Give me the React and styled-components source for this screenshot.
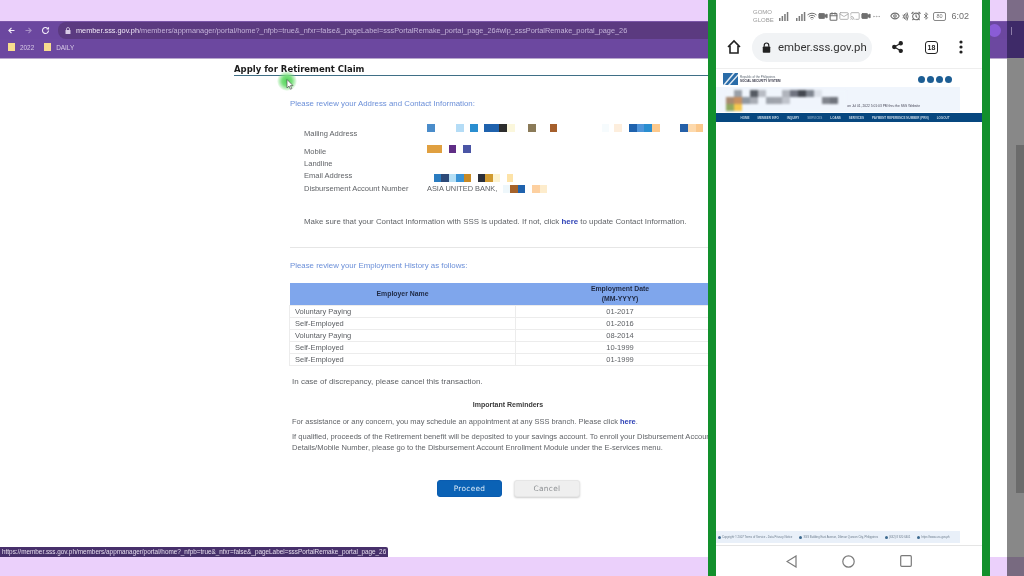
import React from 'react';
import styled, { createGlobalStyle } from 'styled-components';
import { Wifi, Video, Calendar, Mail, Cast, MoreHorizontal, Eye, Nfc, AlarmClock, Bluetooth } from 'lucide-react';

const GlobalStyle = createGlobalStyle`
  html, body {
    margin: 0;
    padding: 0;
    background: #ebd0fb;
  }
  body {
    font-family: "Liberation Sans", Arial, sans-serif;
    overflow: hidden;
  }
`;

const Stage = styled.div`
  position: relative;
  width: 1024px;
  height: 576px;
  overflow: hidden;
  padding-top: 21px;
  box-sizing: border-box;
  background: #ebd0fb;
  filter: blur(0.35px);
`;

/* browser window recorded on the desktop */
const Browser = styled.div`
  position: relative;
  height: 536px;
  display: flex;
  flex-direction: column;
  background: #fff;
`;
const AddressBar = styled.div`
  height: 17px;
  display: flex;
  align-items: stretch;
  background: #6b479f;
  border-top: 1px solid #7a55a8;
`;
const NavButtons = styled.div`
  width: 58px;
  padding-left: 7px;
  display: flex;
  align-items: center;
  gap: 8px;
  box-sizing: border-box;
`;
const UrlWrap = styled.div`
  flex: 1;
  margin-right: 10px;
  display: flex;
  align-items: center;
  gap: 5px;
  padding-left: 7px;
  border-radius: 8px 0 0 8px;
  background: #5b3a80;
  font-size: 7.33px;
  color: #c3b2d8;
  white-space: nowrap;
  overflow: hidden;
`;
const UrlHost = styled.span`
  color: #f0e8f6;
`;
const Avatar = styled.div`
  flex-shrink: 0;
  width: 13px;
  height: 13px;
  margin: 2px 23px 0 0;
  border-radius: 50%;
  background: #8a5cd6;
`;
const BookmarkBar = styled.div`
  height: 16px;
  padding-bottom: 3px;
  display: flex;
  align-items: center;
  gap: 10px;
  padding-left: 8px;
  background: #6c48a0;
  color: #d8cbe6;
  font-size: 6.4px;
`;
const Bookmark = styled.span`
  display: flex;
  align-items: center;
  gap: 5px;
`;
const Folder = styled.i`
  display: block;
  width: 7px;
  height: 8px;
  background: #f7dc8e;
`;

const Viewport = styled.div`
  flex: 1;
  display: flex;
  background: #fff;
  border-top: 1px solid #b8a7cd;
`;
const Content = styled.div`
  margin-left: 222px;
  width: 486px;
  flex-shrink: 0;
  color: #55585c;
  font-size: 7.9px;
`;
const PageTitle = styled.h1`
  margin: 0 0 0 12px;
  padding: 4px 0 0;
  width: 490px;
  font-family: "DejaVu Sans", sans-serif;
  font-size: 8.5px;
  font-weight: 700;
  line-height: 12px;
  color: #1b1b1b;
  border-bottom: 1px solid #3f6f86;
`;
const Inner = styled.div`
  padding-left: 68px;
  width: 470px;
`;
const Lead = styled.p`
  margin: ${(p) => p.$top}px 0 0;
  font-size: 7.85px;
  line-height: 10px;
  color: #6b8fd8;
  white-space: nowrap;
`;
const InfoGrid = styled.div`
  margin: 15px 0 0 14px;
  display: grid;
  grid-template-columns: 123px 1fr;
  color: #606367;
  font-size: 7.55px;
`;
const InfoLabel = styled.div`
  height: ${(p) => p.$h}px;
  padding-bottom: ${(p) => p.$pad || 0}px;
  display: flex;
  align-items: center;
`;
const InfoValue = styled.div`
  height: ${(p) => p.$h}px;
  display: flex;
  align-items: ${(p) => p.$align || 'flex-start'};
  padding-left: ${(p) => p.$indent || 0}px;
  white-space: nowrap;
`;
const BankName = styled.span`
  font-size: 7.4px;
`;
const Mosaic = styled.i`
  display: block;
  flex-shrink: 0;
  width: ${(p) => p.$w}px;
  height: 8px;
  margin-left: ${(p) => p.$gap || 0}px;
  background: ${(p) => p.$c};
`;
const Notice = styled.p`
  margin: 21px 0 0 14px;
  line-height: 12px;
  color: #606367;
  white-space: nowrap;
`;
const Divider = styled.div`
  height: 1px;
  margin-top: 19px;
  width: 430px;
  background: #e6e6e6;
`;
const HistoryTable = styled.table`
  margin: 12px 0 0 -1px;
  width: 436px;
  border-collapse: collapse;
  table-layout: fixed;
  font-size: 7.5px;
`;
const HeadCell = styled.th`
  height: 22px;
  padding: 0;
  background: #7fa6ec;
  color: #1f2a44;
  font-size: 6.9px;
  line-height: 10px;
  font-weight: 700;
`;
const Cell = styled.td`
  height: 11px;
  padding: 0 0 0 ${(p) => (p.$center ? 0 : 5)}px;
  border: 1px solid #ececec;
  text-align: ${(p) => (p.$center ? 'center' : 'left')};
  line-height: 11px;
  color: #5c5f63;
`;
const Plain = styled.p`
  margin: ${(p) => p.$top}px 0 0 2px;
  line-height: ${(p) => p.$line || 11}px;
  font-size: ${(p) => p.$size || 8}px;
  color: #606367;
  white-space: nowrap;
`;
const Reminder = styled.p`
  margin: 13px 0 0;
  width: 436px;
  text-align: center;
  font-size: 7px;
  line-height: 10px;
  font-weight: 700;
  color: #3a3a3a;
`;
const Here = styled.a`
  color: #2b3fb5;
  font-weight: 700;
`;
const Actions = styled.div`
  margin: 27px 0 0 147px;
  display: flex;
  gap: 12px;
`;
const ActionButton = styled.button`
  width: ${(p) => p.$w}px;
  height: 17px;
  padding: 0;
  border-radius: 3px;
  border: 1px solid ${(p) => (p.$primary ? '#0a5cb0' : '#e6e6e6')};
  background: ${(p) => (p.$primary ? '#0b62b5' : '#efefef')};
  color: ${(p) => (p.$primary ? '#dcebf9' : '#8c8f92')};
  box-shadow: ${(p) => (p.$primary ? 'none' : '0 1px 2px rgba(0,0,0,.2)')};
  font-family: "DejaVu Sans", sans-serif;
  font-size: 7.4px;
  letter-spacing: 0.3px;
`;

/* dimmed strip of the recording right of the phone */
const SideStrip = styled.div`
  position: absolute;
  top: 0;
  right: 0;
  bottom: 0;
  width: 17px;
  display: flex;
  flex-direction: column;
`;
const StripTop = styled.div`
  height: 21px;
  background: #7c6c87;
`;
const StripChrome = styled.div`
  height: 37px;
  padding: 6px 0 0 4px;
  box-sizing: border-box;
  background: #3e2a68;
`;
const StripDots = styled.i`
  display: block;
  width: 1px;
  height: 8px;
  background: #8d7da8;
`;
const StripTrack = styled.div`
  height: 499px;
  background: #888;
  padding-top: 87px;
  box-sizing: border-box;
`;
const StripThumb = styled.div`
  margin-left: 9px;
  height: 348px;
  background: #6b6b6b;
`;
const StripBottom = styled.div`
  flex: 1;
  background: #786a80;
`;

const StatusBubble = styled.div`
  position: absolute;
  left: 0;
  bottom: 0;
  height: 10px;
  padding: 0 2px;
  background: #47306b;
  color: #e4dcec;
  font-size: 6.38px;
  line-height: 10px;
  border-radius: 0 2px 0 0;
  white-space: nowrap;
`;
const Glow = styled.div`
  position: absolute;
  left: 277px;
  top: 71px;
  width: 20px;
  height: 20px;
  border-radius: 50%;
  background: radial-gradient(circle, #4fd258 0, #79e07c 35%, rgba(170,240,170,0) 72%);
`;
const Pointer = styled.svg`
  position: absolute;
  left: 286px;
  top: 79px;
`;

/* phone mirror on top of the recording */
const Phone = styled.div`
  position: absolute;
  top: 0;
  left: 708px;
  width: 266px;
  height: 576px;
  display: flex;
  flex-direction: column;
  background: #fff;
  border-left: 8px solid #12902c;
  border-right: 8px solid #12902c;
`;
const StatusBar = styled.div`
  height: 32px;
  display: flex;
  align-items: center;
  padding: 0 13px 0 37px;
  gap: 1px;
  color: #6f6f6f;
`;
const Carrier = styled.div`
  width: 18px;
  margin-right: 7px;
  font-size: 6px;
  line-height: 8px;
  color: #9a9a9a;
`;
const StatusGap = styled.span`
  width: ${(p) => p.$w}px;
`;
const Battery = styled.span`
  width: 11px;
  height: 7px;
  margin: 0 3px 0 2px;
  border: 1px solid #888;
  border-radius: 2px;
  font-size: 5.5px;
  line-height: 7px;
  text-align: center;
  color: #777;
`;
const Clock = styled.span`
  margin-left: auto;
  font-size: 9px;
`;
const ChromeBar = styled.div`
  height: 30px;
  padding: 0 19px 6px 10px;
  display: flex;
  align-items: center;
  border-bottom: 1px solid #eee;
`;
const Omnibox = styled.div`
  margin-left: 10px;
  width: 120px;
  height: 29px;
  flex-shrink: 0;
  border-radius: 15px;
  background: #f1f3f5;
  display: flex;
  align-items: center;
  gap: 7px;
  padding-left: 10px;
  box-sizing: border-box;
  overflow: hidden;
  font-family: Roboto, sans-serif;
  font-size: 11.4px;
  color: #333;
  white-space: nowrap;
`;
const LockIcon = styled.svg`
  flex-shrink: 0;
`;
const ChromeIcons = styled.div`
  margin-left: auto;
  display: flex;
  align-items: center;
  gap: 21px;
`;
const TabCount = styled.div`
  width: 11px;
  height: 11px;
  border: 1.2px solid #222;
  border-radius: 3px;
  font-size: 7px;
  font-weight: 700;
  line-height: 11px;
  text-align: center;
  color: #222;
`;
const SiteHeader = styled.div`
  height: 18px;
  display: flex;
  align-items: center;
  padding: 2px 30px 0 7px;
  box-sizing: border-box;
`;
const Logo = styled.div`
  display: flex;
  align-items: center;
  gap: 2px;
`;
const LogoText = styled.div`
  font-size: 3px;
  line-height: 4px;
  color: #5f6a75;
`;
const LogoName = styled.div`
  font-weight: 700;
  color: #334;
`;
const Socials = styled.div`
  margin-left: auto;
  display: flex;
  gap: 2px;
`;
const SocialDot = styled.i`
  display: block;
  width: 7px;
  height: 7px;
  border-radius: 50%;
  background: #1d5e94;
`;
const Banner = styled.div`
  position: relative;
  height: 25px;
  padding: 3px 0 0 10px;
  margin-right: 22px;
  box-sizing: border-box;
  background: #f0f5fc;
  font-size: 3.3px;
  color: #445;
`;
const BannerMosaic = styled.div`
  display: grid;
  grid-template-columns: repeat(15, 8px);
  grid-auto-rows: 7px;
  filter: blur(0.8px);
`;
const BannerCell = styled.i`
  display: block;
  background: ${(p) => p.$c};
`;
const BannerNote = styled.span`
  position: absolute;
  right: 40px;
  bottom: 4px;
`;
const SiteNav = styled.div`
  height: 9px;
  padding-right: 8px;
  display: flex;
  align-items: center;
  justify-content: center;
  gap: 8px;
  margin-top: 1px;
  background: #07477f;
  color: #c8d8e6;
  font-size: 3px;
  font-weight: 700;
`;
const NavItem = styled.span`
  opacity: ${(p) => (p.$dim ? 0.55 : 1)};
`;
const Blank = styled.div`
  flex: 1;
`;
const SiteFooter = styled.div`
  height: 12px;
  margin-right: 22px;
  display: flex;
  align-items: center;
  gap: 7px;
  padding-left: 2px;
  background: #e9f0f9;
  color: #6b7b8c;
  font-size: 2.8px;
  white-space: nowrap;
`;
const FooterItem = styled.span`
  display: flex;
  align-items: center;
  gap: 1px;
`;
const FooterDot = styled.i`
  display: block;
  width: 3px;
  height: 3px;
  border-radius: 50%;
  background: #3d6a8f;
`;
const NavBar = styled.div`
  height: 30px;
  margin-top: 2px;
  border-top: 1px solid #e5e5e5;
  display: flex;
  align-items: center;
  justify-content: center;
  gap: 45px;
`;

const mailing = [
  [8, '#4a8cca', 0], [8, '#b4dcf6', 21], [8, '#2a8ed0', 6], [15, '#1f62ad', 6], [8, '#2d2d2d', 0],
  [8, '#fbf7dc', 0], [8, '#8a7a58', 13], [7, '#a55f2c', 14], [7, '#f6fbfd', 45], [8, '#fdeedd', 5],
  [8, '#1f62ad', 7], [7, '#4f95da', 0], [8, '#2a8ed0', 0], [8, '#fdc98c', 0], [8, '#2560a8', 20],
  [8, '#fdd9ac', 0], [7, '#fbc88c', 0],
];
const mobile = [[15, '#e0a040', 0], [7, '#5f2d85', 7], [8, '#4a55a5', 7]];
const email = [
  [7, '#2a7cc0', 0], [8, '#2d4a78', 0], [7, '#b5dff5', 0], [8, '#3a93d5', 0], [7, '#c88a25', 0],
  [7, '#2a2f3a', 7], [8, '#d09a30', 0], [7, '#fdf3d0', 0], [6, '#fde3a8', 7],
];
const account = [[7, '#eef7fb', 6], [8, '#a5622a', 0], [7, '#1f62ad', 0], [8, '#fdd0a0', 7], [7, '#fdeccc', 0]];
const B = '#f0f5fc';
const bannerCells = [
  B, '#9aa0a8', B, '#555a62', '#b8bcc4', B, B, '#b0b4bc', '#707480', '#444850', '#808690', '#dde2ea', B, B, B,
  '#a88a70', '#c89060', '#9098a2', '#a8acb4', B, '#9ea3ab', '#a0a4ac', '#c0c4cc', B, B, B, B, '#80848c', '#70747c', B,
  '#90a860', '#f5c850', B, B, B, B, B, B, B, B, B, B, B, B, B,
];
const jobs = [
  ['Voluntary Paying', '01-2017'],
  ['Self-Employed', '01-2016'],
  ['Voluntary Paying', '08-2014'],
  ['Self-Employed', '10-1999'],
  ['Self-Employed', '01-1999'],
];

function Redacted({ blocks }) {
  return blocks.map(([w, c, gap], i) => <Mosaic key={i} $w={w} $c={c} $gap={gap} />);
}

function Arrow({ flip, color }) {
  return (
    <svg width="9" height="9" viewBox="0 0 24 24" fill="none" stroke={color} strokeWidth="3" style={flip ? { transform: 'scaleX(-1)' } : undefined}>
      <path d="M20 12H5M12 5l-7 7 7 7" />
    </svg>
  );
}

function Signal() {
  return (
    <svg width="10" height="9" viewBox="0 0 10 9" fill="#7a7a7a">
      <rect x="0" y="6" width="1.5" height="3" />
      <rect x="2.6" y="4" width="1.5" height="5" />
      <rect x="5.2" y="2" width="1.5" height="7" />
      <rect x="7.8" y="0" width="1.5" height="9" />
    </svg>
  );
}

export default function App() {
  return (
    <Stage>
      <GlobalStyle />
      <Browser>
        <AddressBar>
          <NavButtons>
            <Arrow color="#f2ecf8" />
            <Arrow flip color="#a78fc6" />
            <svg width="9" height="9" viewBox="0 0 24 24" fill="none" stroke="#f2ecf8" strokeWidth="3">
              <path d="M20 12a8 8 0 1 1-2.5-5.8M20 3v5h-5" />
            </svg>
          </NavButtons>
          <UrlWrap>
            <svg width="6" height="7" viewBox="0 0 12 14" fill="#d9cce6">
              <rect x="1" y="6" width="10" height="8" rx="1" />
              <path d="M3 6V4a3 3 0 0 1 6 0v2" fill="none" stroke="#d9cce6" strokeWidth="1.6" />
            </svg>
            <span>
              <UrlHost>member.sss.gov.ph</UrlHost>
              /members/appmanager/portal/home?_nfpb=true&amp;_nfxr=false&amp;_pageLabel=sssPortalRemake_portal_page_26#wlp_sssPortalRemake_portal_page_26
            </span>
          </UrlWrap>
          <Avatar />
        </AddressBar>
        <BookmarkBar>
          <Bookmark><Folder />2022</Bookmark>
          <Bookmark><Folder />DAILY</Bookmark>
        </BookmarkBar>
        <Viewport>
          <Content>
            <PageTitle>Apply for Retirement Claim</PageTitle>
            <Inner>
              <Lead $top={23}>Please review your Address and Contact Information:</Lead>
              <InfoGrid>
                <InfoLabel $h={18} $pad={3}>Mailing Address</InfoLabel>
                <InfoValue $h={21}><Redacted blocks={mailing} /></InfoValue>
                <InfoLabel $h={12}>Mobile</InfoLabel>
                <InfoValue $h={12}><Redacted blocks={mobile} /></InfoValue>
                <InfoLabel $h={12}>Landline</InfoLabel>
                <InfoValue $h={12} />
                <InfoLabel $h={13}>Email Address</InfoLabel>
                <InfoValue $h={13} $indent={7} $align="flex-end"><Redacted blocks={email} /></InfoValue>
                <InfoLabel $h={13}>Disbursement Account Number</InfoLabel>
                <InfoValue $h={13} $align="center">
                  <BankName>ASIA UNITED BANK,</BankName>
                  <Redacted blocks={account} />
                </InfoValue>
              </InfoGrid>
              <Notice>
                Make sure that your Contact Information with SSS is updated. If not, click <Here>here</Here> to update Contact Information.
              </Notice>
              <Divider />
              <Lead $top={13}>Please review your Employment History as follows:</Lead>
              <HistoryTable>
                <colgroup>
                  <col style={{ width: 226 }} />
                  <col />
                </colgroup>
                <thead>
                  <tr>
                    <HeadCell>Employer Name</HeadCell>
                    <HeadCell>Employment Date<br />(MM-YYYY)</HeadCell>
                  </tr>
                </thead>
                <tbody>
                  {jobs.map(([name, date], i) => (
                    <tr key={i}>
                      <Cell>{name}</Cell>
                      <Cell $center>{date}</Cell>
                    </tr>
                  ))}
                </tbody>
              </HistoryTable>
              <Plain $top={10}>In case of discrepancy, please cancel this transaction.</Plain>
              <Reminder>Important Reminders</Reminder>
              <Plain $top={6} $size={7.47}>
                For assistance or any concern, you may schedule an appointment at any SSS branch. Please click <Here>here</Here>.
              </Plain>
              <Plain $top={5} $size={7.55} $line={10.5}>
                If qualified, proceeds of the Retirement benefit will be deposited to your savings account. To enroll your Disbursement Account
                <br />
                Details/Mobile Number, please go to the Disbursement Account Enrollment Module under the E-services menu.
              </Plain>
              <Actions>
                <ActionButton $primary $w={65}>Proceed</ActionButton>
                <ActionButton $w={66}>Cancel</ActionButton>
              </Actions>
            </Inner>
          </Content>
        </Viewport>
        <StatusBubble>
          https://member.sss.gov.ph/members/appmanager/portal/home?_nfpb=true&amp;_nfxr=false&amp;_pageLabel=sssPortalRemake_portal_page_26
        </StatusBubble>
      </Browser>
      <Glow />
      <Pointer width="8" height="11" viewBox="0 0 8 11">
        <path d="M1 0.5v8.5l2-2 1.4 3.2 1.4-.6L4.4 6.6H7z" fill="#fff" stroke="#555" strokeWidth="0.7" />
      </Pointer>
      <SideStrip>
        <StripTop />
        <StripChrome><StripDots /></StripChrome>
        <StripTrack><StripThumb /></StripTrack>
        <StripBottom />
      </SideStrip>
      <Phone>
        <StatusBar>
          <Carrier>GOMO<br />GLOBE</Carrier>
          <Signal />
          <StatusGap $w={5} />
          <Signal />
          <Wifi size={10} strokeWidth={2.4} />
          <Video size={10} fill="currentColor" />
          <Calendar size={9} strokeWidth={3} />
          <Mail size={10} color="#a5a5a5" />
          <Cast size={10} color="#a5a5a5" />
          <Video size={10} fill="currentColor" />
          <MoreHorizontal size={9} color="#a5a5a5" />
          <StatusGap $w={7} />
          <Eye size={10} strokeWidth={2.6} />
          <Nfc size={9} strokeWidth={2.6} />
          <AlarmClock size={10} strokeWidth={2.6} />
          <Bluetooth size={8} strokeWidth={2.4} />
          <Battery>80</Battery>
          <Clock>6:02</Clock>
        </StatusBar>
        <ChromeBar>
          <svg width="16" height="16" viewBox="0 0 24 24" fill="none" stroke="#222" strokeWidth="2.4">
            <path d="M3 12l9-9 9 9M6 10v11h12V10" />
          </svg>
          <Omnibox>
            <LockIcon width="9" height="11" viewBox="0 0 12 14" fill="#222">
              <rect x="1" y="5.5" width="10" height="8.5" rx="1" />
              <path d="M3 6V4a3 3 0 0 1 6 0v2" fill="none" stroke="#222" strokeWidth="1.6" />
            </LockIcon>
            <span>ember.sss.gov.ph</span>
          </Omnibox>
          <ChromeIcons>
            <svg width="13" height="14" viewBox="0 0 24 24" fill="#222" stroke="#222" strokeWidth="2">
              <circle cx="18" cy="5" r="3" />
              <circle cx="6" cy="12" r="3" />
              <circle cx="18" cy="19" r="3" />
              <path d="M6 12L18 5M6 12l12 7" />
            </svg>
            <TabCount>18</TabCount>
            <svg width="4" height="14" viewBox="0 0 4 14" fill="#222">
              <circle cx="2" cy="2" r="1.6" />
              <circle cx="2" cy="7" r="1.6" />
              <circle cx="2" cy="12" r="1.6" />
            </svg>
          </ChromeIcons>
        </ChromeBar>
        <SiteHeader>
          <Logo>
            <svg width="15" height="12" viewBox="0 0 15 12">
              <rect width="15" height="12" fill="#2a6ca8" />
              <path d="M0 12L10 0h2L2 12zM5 12L15 1v2L7 12z" fill="#dfe9f2" />
            </svg>
            <LogoText>
              Republic of the Philippines
              <LogoName>SOCIAL SECURITY SYSTEM</LogoName>
            </LogoText>
          </Logo>
          <Socials>
            <SocialDot />
            <SocialDot />
            <SocialDot />
            <SocialDot />
          </Socials>
        </SiteHeader>
        <Banner>
          <BannerMosaic>
            {bannerCells.map((c, i) => <BannerCell key={i} $c={c} />)}
          </BannerMosaic>
          <BannerNote>on Jul 01, 2022 5:01:03 PM thru the SSS Website</BannerNote>
        </Banner>
        <SiteNav>
          <NavItem>HOME</NavItem>
          <NavItem>MEMBER INFO</NavItem>
          <NavItem>INQUIRY</NavItem>
          <NavItem $dim>SERVICES</NavItem>
          <NavItem>LOANS</NavItem>
          <NavItem>SERVICES</NavItem>
          <NavItem>PAYMENT REFERENCE NUMBER (PRN)</NavItem>
          <NavItem>LOGOUT</NavItem>
        </SiteNav>
        <Blank />
        <SiteFooter>
          <FooterItem><FooterDot />Copyright © 2007 Terms of Service - Data Privacy Notice</FooterItem>
          <FooterItem><FooterDot />SSS Building East Avenue, Diliman Quezon City, Philippines</FooterItem>
          <FooterItem><FooterDot />(632) 8 920 6401</FooterItem>
          <FooterItem><FooterDot />https://www.sss.gov.ph</FooterItem>
        </SiteFooter>
        <NavBar>
          <svg width="11" height="13" viewBox="0 0 11 13" fill="none" stroke="#7a7a7a" strokeWidth="1.2">
            <path d="M10 1L1 6.5l9 5.5z" />
          </svg>
          <svg width="13" height="13" viewBox="0 0 13 13" fill="none" stroke="#7a7a7a" strokeWidth="1.2">
            <circle cx="6.5" cy="6.5" r="5.7" />
          </svg>
          <svg width="12" height="12" viewBox="0 0 12 12" fill="none" stroke="#7a7a7a" strokeWidth="1.2">
            <rect x="0.7" y="0.7" width="10.6" height="10.6" rx="1" />
          </svg>
        </NavBar>
      </Phone>
    </Stage>
  );
}
